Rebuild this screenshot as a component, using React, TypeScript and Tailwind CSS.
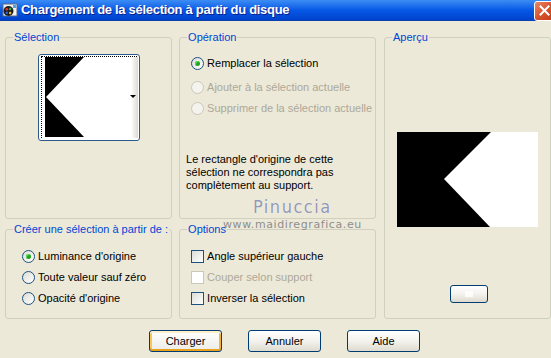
import React from "react";

function Radio({ checked = false, disabled = false }: { checked?: boolean; disabled?: boolean }) {
  return (
    <span
      className={
        disabled
          ? "relative flex w-[13px] h-[13px] shrink-0 rounded-full border border-[#CAC8BB] bg-[#F4F3EE]"
          : "relative flex w-[13px] h-[13px] shrink-0 rounded-full border border-[#1C5180] bg-gradient-to-br from-[#DCDCD7] to-[#FFFFFF]"
      }
    >
      {checked && (
        <span className="absolute left-[3px] top-[3px] w-[5px] h-[5px] rounded-full bg-[#21A121] shadow-[inset_1px_1px_0_#5EDB5E]" />
      )}
    </span>
  );
}

function Check({ disabled = false }: { disabled?: boolean }) {
  return (
    <span
      className={
        disabled
          ? "block w-[13px] h-[13px] shrink-0 border border-[#CAC8BB] bg-white"
          : "block w-[13px] h-[13px] shrink-0 border border-[#1C5180] bg-gradient-to-br from-[#DCDCD7] to-[#FFFFFF]"
      }
    />
  );
}

function Group({
  label,
  className,
  children,
}: {
  label: string;
  className: string;
  children?: React.ReactNode;
}) {
  return (
    <div className={"relative border border-[#D0D0BF] rounded-[3px] " + className}>
      <span className="absolute -top-[7px] left-[7px] px-[1px] bg-[#ECE9D8] text-[#0046D5] leading-[13px] whitespace-nowrap">
        {label}
      </span>
      {children}
    </div>
  );
}

function Row({
  children,
  disabled = false,
  className,
}: {
  children: React.ReactNode;
  disabled?: boolean;
  className: string;
}) {
  return (
    <div
      className={
        "flex items-center gap-[3px] h-[13px] leading-[13px] whitespace-nowrap " +
        (disabled ? "text-[#ACA899] " : "text-black ") +
        className
      }
    >
      {children}
    </div>
  );
}

function XPButton({ label, isDefault = false }: { label: string; isDefault?: boolean }) {
  return (
    <div
      className={
        isDefault
          ? "flex items-center justify-center w-[73px] h-[22px] rounded-[3px] border border-[#003C74] bg-gradient-to-b from-[#FFFFFF] to-[#ECEBE6] shadow-[inset_0_-2px_0_#E9A21C,inset_0_2px_0_#FFEFC8,inset_2px_0_0_#F8C659,inset_-2px_0_0_#F3B43A] text-black"
          : "flex items-center justify-center w-[73px] h-[22px] rounded-[3px] border border-[#003C74] bg-gradient-to-b from-[#FFFFFF] via-[#F3F2ED] to-[#DEDBCF] text-black"
      }
    >
      {label}
    </div>
  );
}

export default function App() {
  return (
    <div className="relative w-[551px] h-[358px] overflow-hidden bg-[#ECE9D8] font-['Liberation_Sans',Arial,sans-serif] text-[11px]">
      {/* Title bar */}
      <div className="flex items-center h-[21px] bg-gradient-to-b from-[#3C8CF4] via-[#0758E6] to-[#0042CC] border-b border-[#0A3FB0]">
        <svg width="16" height="16" viewBox="0 0 16 16" className="ml-[2px] shrink-0">
          <rect x="1" y="2" width="14" height="12" fill="#F2F2F2" stroke="#5A6A80" />
          <circle cx="6.5" cy="9" r="5" fill="#1E1E1E" />
          <circle cx="4.8" cy="7.2" r="1.3" fill="#E23A2A" />
          <circle cx="8.2" cy="7" r="1.2" fill="#3FB23F" />
          <circle cx="4.8" cy="10.8" r="1.2" fill="#2D6DE0" />
          <circle cx="8.2" cy="11" r="1.2" fill="#F0C020" />
          <rect x="11" y="3" width="3" height="3" fill="#49A7E8" />
        </svg>
        <span className="ml-[3px] text-white font-bold text-[13px] tracking-[-0.3px] whitespace-nowrap [text-shadow:1px_1px_0_#0A1E8A]">
          Chargement de la sélection à partir du disque
        </span>
        <div className="ml-auto mr-[-4px] mt-[1px] flex items-center justify-center w-[21px] h-[20px] rounded-[3px] border border-white bg-gradient-to-br from-[#E8866A] via-[#D9532C] to-[#C13C17]">
          <svg width="11" height="11" viewBox="0 0 11 11">
            <path d="M1.5 1.5 L9.5 9.5 M9.5 1.5 L1.5 9.5" stroke="white" strokeWidth="2" strokeLinecap="square" />
          </svg>
        </div>
      </div>

      {/* Body */}
      <div className="flex pl-[5px] pt-[16px]">
        {/* Left column */}
        <div className="flex flex-col w-[168px] gap-[10px]">
          <Group label="Sélection" className="h-[182px]">
            <div className="mt-[16px] mx-auto w-[102px] h-[87px] rounded-[3px] border border-[#2C5A8C] bg-white p-[2px] pt-[1px]">
              <div className="w-full h-full border border-dotted border-black">
                <svg width="96" height="81" viewBox="0 0 96 81" className="block">
                  <defs>
                    <linearGradient id="edge" x1="0" x2="1" y1="0" y2="0">
                      <stop offset="0" stopColor="#FFFFFF" />
                      <stop offset="1" stopColor="#DCDAD2" />
                    </linearGradient>
                  </defs>
                  <rect x="0" y="0" width="96" height="81" fill="white" />
                  <polygon points="3,0 42,0 4,40 42,80 3,80" fill="black" />
                  <rect x="89" y="0" width="7" height="81" fill="url(#edge)" />
                  <polygon points="88,38 94,38 91,41" fill="black" />
                </svg>
              </div>
            </div>
          </Group>
          <Group label="Créer une sélection à partir de :" className="h-[90px]">
            <div className="flex flex-col pl-[16px] pt-[20px]">
              <Row className="">
                <Radio checked />
                <span>Luminance d'origine</span>
              </Row>
              <Row className="mt-[8px]">
                <Radio />
                <span>Toute valeur sauf zéro</span>
              </Row>
              <Row className="mt-[8px]">
                <Radio />
                <span>Opacité d'origine</span>
              </Row>
            </div>
          </Group>
        </div>

        {/* Middle column */}
        <div className="flex flex-col w-[198px] ml-[7px] gap-[10px]">
          <Group label="Opération" className="h-[182px]">
            <div className="flex flex-col pl-[11px] pt-[19px]">
              <Row className="">
                <Radio checked />
                <span>Remplacer la sélection</span>
              </Row>
              <Row disabled className="mt-[11px]">
                <Radio disabled />
                <span>Ajouter à la sélection actuelle</span>
              </Row>
              <Row disabled className="mt-[8px]">
                <Radio disabled />
                <span>Supprimer de la sélection actuelle</span>
              </Row>
            </div>
            <p className="mt-[38px] ml-[6px] leading-[13px] text-black">
              Le rectangle d'origine de cette
              <br />
              sélection ne correspondra pas
              <br />
              complètement au support.
            </p>
          </Group>
          <Group label="Options" className="h-[90px]">
            <div className="flex flex-col pl-[11px] pt-[20px]">
              <Row className="">
                <Check />
                <span>Angle supérieur gauche</span>
              </Row>
              <Row disabled className="mt-[8px]">
                <Check disabled />
                <span>Couper selon support</span>
              </Row>
              <Row className="mt-[8px]">
                <Check />
                <span>Inverser la sélection</span>
              </Row>
            </div>
          </Group>
        </div>

        {/* Right column */}
        <div className="flex flex-col w-[167px] ml-[8px] shrink-0">
          <Group label="Aperçu" className="h-[282px]">
            <svg width="141" height="95" viewBox="0 0 141 95" className="block mt-[94px] ml-[12px]">
              <rect x="0" y="0" width="141" height="95" fill="black" />
              <polygon points="94,0 141,0 141,95 93,95 47,47" fill="white" />
            </svg>
            <div className="mt-[58px] ml-[65px] w-[38px] h-[18px] rounded-[3px] border border-[#003C74] bg-gradient-to-b from-[#FFFFFF] via-[#F3F2ED] to-[#DEDBCF] flex items-center justify-center">
              <span className="block w-[8px] h-[6px] bg-white opacity-80" />
            </div>
          </Group>
        </div>
      </div>

      {/* Buttons */}
      <div className="flex pl-[149px] mt-[11px] gap-[26px]">
        <XPButton label="Charger" isDefault />
        <XPButton label="Annuler" />
        <XPButton label="Aide" />
      </div>

      {/* Watermark */}
      <div className="absolute left-[253px] top-[197px] text-[18px] leading-[20px] tracking-[1.5px] text-[#9599B4] font-['DejaVu_Sans_Condensed','DejaVu_Sans',sans-serif] [text-shadow:0_0_1px_#ffffff]">
        Pinuccia
      </div>
      <div className="absolute left-[223px] top-[219px] text-[11px] leading-[12px] tracking-[0.6px] text-[#8E8E8E] font-['DejaVu_Sans',sans-serif]">
        www.maidiregrafica.eu
      </div>
    </div>
  );
}
